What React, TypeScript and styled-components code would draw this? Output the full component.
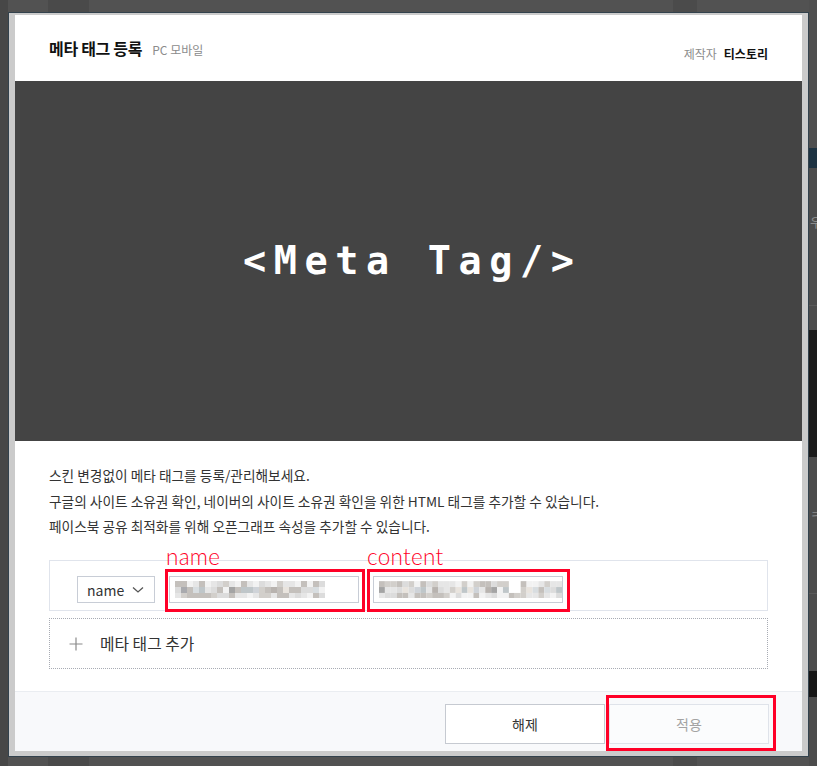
import React from "react";
import styled, { createGlobalStyle } from "styled-components";

const GlobalStyle = createGlobalStyle`
  html, body {
    margin: 0;
    padding: 0;
    overflow: hidden;
    background: #4f4f4f;
  }
  body {
    font-family: "Noto Sans CJK KR", "Noto Sans", sans-serif;
  }
  * { box-sizing: border-box; }
`;

const Page = styled.div`
  display: flex;
  width: 817px;
  height: 766px;
  background: linear-gradient(
    to right,
    #474747 0 8px,
    #525252 8px 48px,
    #4a4a4a 48px 89px,
    #525252 89px 673px,
    #4b4b4b 673px 697px,
    #525252 697px
  );
  overflow: hidden;
`;

const SideStrip = styled.div<{ $w: number }>`
  width: ${(p) => p.$w}px;
  flex-shrink: 0;
  display: flex;
  flex-direction: column;
  overflow: hidden;
`;

const StripBlock = styled.div<{ $h: number; $bg: string }>`
  height: ${(p) => p.$h}px;
  background: ${(p) => p.$bg};
  flex-shrink: 0;
  overflow: hidden;
`;

const StripGlyphs = styled.div<{ $top: number }>`
  margin-top: ${(p) => p.$top}px;
  margin-left: 1px;
  color: #8d8d8d;
  font-size: 13px;
  line-height: 20px;
  white-space: nowrap;
`;

const ModalColumn = styled.div`
  padding-top: 12px;
  flex-shrink: 0;
`;

const Modal = styled.div`
  width: 801px;
  border: 1px solid #33424d;
  background: #cbcbcb;
  padding: 2px 6px 5px 6px;
`;

const Sheet = styled.div`
  width: 787px;
  height: 736px;
  background: #ffffff;
  display: flex;
  flex-direction: column;
`;

const Header = styled.header`
  height: 66px;
  flex-shrink: 0;
  display: flex;
  justify-content: space-between;
  align-items: flex-start;
  padding: 0 34px;
`;

const TitleGroup = styled.div`
  display: flex;
  align-items: baseline;
  gap: 10px;
  margin-top: 22px;
`;

const Title = styled.h1`
  margin: 0;
  font-size: 16px;
  line-height: 22px;
  font-weight: 700;
  color: #111;
  letter-spacing: -0.3px;
`;

const SubTitle = styled.span`
  font-size: 12px;
  color: #8c8c8c;
`;

const Maker = styled.div`
  display: flex;
  align-items: baseline;
  gap: 7px;
  margin-top: 30px;
  font-size: 12px;
  line-height: 17px;
`;

const MakerLabel = styled.span`
  color: #8c8c8c;
`;

const MakerName = styled.span`
  color: #111;
  font-weight: 700;
`;

const Banner = styled.div`
  height: 360px;
  flex-shrink: 0;
  background: #444444;
  display: flex;
  align-items: center;
  justify-content: center;
`;

const BannerText = styled.div`
  font-family: "DejaVu Sans Mono", "Liberation Mono", monospace;
  font-weight: 700;
  font-size: 38.5px;
  letter-spacing: 7.6px;
  padding-left: 7.6px;
  color: #ffffff;
  line-height: 1;
`;

const Body = styled.section`
  flex: 1;
  padding: 22px 34px 22px;
  display: flex;
  flex-direction: column;
`;

const Desc = styled.p`
  margin: 0;
  font-size: 13.7px;
  line-height: 25.5px;
  color: #333;
  white-space: nowrap;
`;

const MetaRow = styled.div`
  position: relative;
  margin-top: 20.5px;
  height: 51px;
  border: 1px solid #e0e4ec;
  display: flex;
  align-items: flex-start;
  gap: 14px;
  padding: 15px 0 0 27px;
`;

const SelectBox = styled.div`
  width: 78px;
  height: 27px;
  border: 1px solid #c8cdd6;
  background: #fff;
  display: flex;
  align-items: center;
  justify-content: space-between;
  padding: 0 10px 0 9px;
  font-size: 14px;
  color: #333;
`;

const InputBox = styled.div`
  width: 190px;
  height: 27px;
  border: 1px solid #c8cdd6;
  background: #fff;
  display: flex;
  align-items: center;
  padding-left: 5px;
  overflow: hidden;
`;

const Annotation = styled.div<{ $left: number; $top: number; $w: number; $h: number }>`
  position: absolute;
  left: ${(p) => p.$left}px;
  top: ${(p) => p.$top}px;
  width: ${(p) => p.$w}px;
  height: ${(p) => p.$h}px;
  border: 3px solid #ff0027;
  pointer-events: none;
`;

const AnnotationLabel = styled.span<{ $left: number }>`
  position: absolute;
  left: ${(p) => p.$left}px;
  top: -15px;
  font-family: Lato, "Noto Sans", sans-serif;
  font-weight: 300;
  font-size: 22.5px;
  line-height: 22px;
  color: #ff0027;
  letter-spacing: 0.3px;
`;

const AddRow = styled.div`
  margin-top: 7px;
  height: 51px;
  border: 1px dotted #a8acb4;
  display: flex;
  align-items: center;
  gap: 17px;
  padding-left: 19px;
  font-size: 15.8px;
  color: #333;
`;

const Footer = styled.footer`
  height: 60px;
  flex-shrink: 0;
  border-top: 1px solid #eaedf1;
  background: #f8f9fb;
  display: flex;
  justify-content: flex-end;
  align-items: flex-start;
  gap: 4px;
  padding: 12px 33px 0 0;
`;

const Button = styled.button<{ $disabled?: boolean }>`
  width: 160px;
  height: 40px;
  border: 1px solid ${(p) => (p.$disabled ? "#dfe3ea" : "#c6cad1")};
  background: ${(p) => (p.$disabled ? "#fbfcfd" : "#ffffff")};
  color: ${(p) => (p.$disabled ? "#a3a3a3" : "#333333")};
  font-family: "Noto Sans CJK KR", "Noto Sans", sans-serif;
  font-size: 14px;
  padding: 0;
  cursor: pointer;
`;

const ButtonWrap = styled.div`
  position: relative;
`;

const greys = [
  "#f2f2f2",
  "#e6e6e6",
  "#dcdcdc",
  "#d2cfcb",
  "#c4c0bc",
  "#b8b3af",
  "#a9aaae",
  "#bfc6c9",
  "#d8dde0",
  "#e9e4de",
  "#cfd3d8",
  "#a4a4a4",
];

function rand(seed: number) {
  let s = seed;
  return () => {
    s = (s * 9301 + 49297) % 233280;
    return s / 233280;
  };
}

const Mosaic: React.FC<{ cols: number; seed: number; gapAt?: number[] }> = ({ cols, seed, gapAt = [] }) => {
  const r = rand(seed);
  const cell = 6;
  const rects: React.ReactNode[] = [];
  for (let row = 0; row < 3; row++) {
    for (let c = 0; c < cols; c++) {
      if (gapAt.includes(c) && row < 2) continue;
      const v = r();
      const idx = row === 1 ? Math.floor(v * greys.length) : Math.floor(v * 5);
      rects.push(
        <rect key={`${row}-${c}`} x={c * cell} y={row * cell} width={cell} height={cell} fill={greys[idx]} />
      );
    }
  }
  return (
    <svg width={cols * cell} height={17} viewBox={`0 0 ${cols * cell} 17`}>
      {rects}
    </svg>
  );
};

const Chevron = () => (
  <svg width="12" height="8" viewBox="0 0 12 8">
    <path d="M1 1.5 L6 6 L11 1.5" fill="none" stroke="#555" strokeWidth="1.3" />
  </svg>
);

const Plus = () => (
  <svg width="14" height="14" viewBox="0 0 14 14">
    <path d="M7 0.5 V13.5 M0.5 7 H13.5" fill="none" stroke="#8a8a8a" strokeWidth="1.2" />
  </svg>
);

export default function App() {
  return (
    <>
      <GlobalStyle />
      <Page>
        <SideStrip $w={8} />
        <ModalColumn>
          <Modal>
            <Sheet>
              <Header>
                <TitleGroup>
                  <Title>메타 태그 등록</Title>
                  <SubTitle>PC 모바일</SubTitle>
                </TitleGroup>
                <Maker>
                  <MakerLabel>제작자</MakerLabel>
                  <MakerName>티스토리</MakerName>
                </Maker>
              </Header>
              <Banner>
                <BannerText>&lt;Meta Tag/&gt;</BannerText>
              </Banner>
              <Body>
                <Desc>스킨 변경없이 메타 태그를 등록/관리해보세요.</Desc>
                <Desc>구글의 사이트 소유권 확인, 네이버의 사이트 소유권 확인을 위한 HTML 태그를 추가할 수 있습니다.</Desc>
                <Desc>페이스북 공유 최적화를 위해 오픈그래프 속성을 추가할 수 있습니다.</Desc>
                <MetaRow>
                  <SelectBox>
                    <span>name</span>
                    <Chevron />
                  </SelectBox>
                  <InputBox>
                    <Mosaic cols={25} seed={17} />
                  </InputBox>
                  <InputBox>
                    <Mosaic cols={31} seed={43} gapAt={[22, 23]} />
                  </InputBox>
                  <Annotation $left={115} $top={8} $w={200} $h={43} />
                  <Annotation $left={317} $top={8} $w={203} $h={43} />
                  <AnnotationLabel $left={116}>name</AnnotationLabel>
                  <AnnotationLabel $left={317}>content</AnnotationLabel>
                </MetaRow>
                <AddRow>
                  <Plus />
                  <span>메타 태그 추가</span>
                </AddRow>
              </Body>
              <Footer>
                <Button>해제</Button>
                <ButtonWrap>
                  <Button $disabled>적용</Button>
                  <Annotation $left={-3} $top={-9} $w={170} $h={56} />
                </ButtonWrap>
              </Footer>
            </Sheet>
          </Modal>
        </ModalColumn>
        <SideStrip $w={8}>
          <StripBlock $h={148} $bg="#4f4f4f" />
          <StripBlock $h={20} $bg="#1e3342" />
          <StripBlock $h={137} $bg="#4c4c4c">
            <StripGlyphs $top={44}>우</StripGlyphs>
          </StripBlock>
          <StripBlock $h={1} $bg="#5a5a5a" />
          <StripBlock $h={24} $bg="#4c4c4c" />
          <StripBlock $h={127} $bg="#1b1b1b" />
          <StripBlock $h={136} $bg="#4c4c4c">
            <StripGlyphs $top={48}>ㅋ</StripGlyphs>
          </StripBlock>
          <StripBlock $h={1} $bg="#5a5a5a" />
          <StripBlock $h={77} $bg="#4c4c4c" />
          <StripBlock $h={26} $bg="#161616" />
          <StripBlock $h={100} $bg="#4c4c4c" />
        </SideStrip>
      </Page>
    </>
  );
}
